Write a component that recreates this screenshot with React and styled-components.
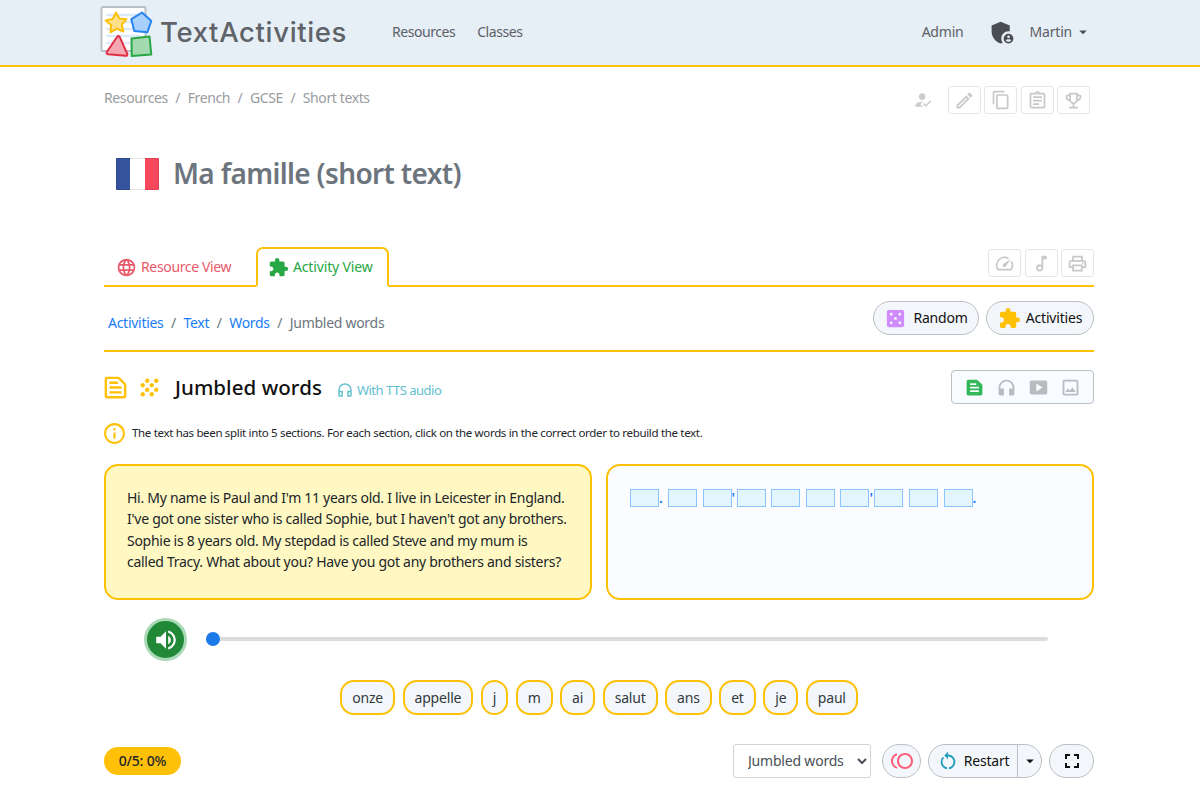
import React, { useState } from "react";
import styled, { createGlobalStyle } from "styled-components";
import {
  MdAdminPanelSettings,
  MdArrowDropDown,
  MdCasino,
  MdContentCopy,
  MdExtension,
  MdFullscreen,
  MdGrain,
  MdHeadphones,
  MdHowToReg,
  MdInfoOutline,
  MdLanguage,
  MdOutlineAssignment,
  MdOutlineEmojiEvents,
  MdOutlineHeadphones,
  MdOutlineImage,
  MdOutlineModeEdit,
  MdOutlineMusicNote,
  MdOutlinePrint,
  MdOutlineSpeed,
  MdOutlineTextSnippet,
  MdOutlineToll,
  MdRestartAlt,
  MdSmartDisplay,
  MdTextSnippet,
  MdVolumeUp,
} from "react-icons/md";

const GlobalStyle = createGlobalStyle`
  :root {
    --yellow: #ffc107;
    --pale: #f3f7fb;
    --grey: #6c757d;
    --dark: #212529;
  }

  * {
    box-sizing: border-box;
  }

  body {
    margin: 0;
    background: #fff;
    color: var(--dark);
    font-family: "Noto Sans", "Open Sans", sans-serif;
    font-size: 14px;
    letter-spacing: -0.2px;
    line-height: 20px;
    overflow: hidden;
  }

  svg {
    display: block;
    flex: none;
  }
`;

const Header = styled.header`
  height: 67px;
  padding: 0 108px 1px 100px;
  display: flex;
  align-items: center;
  background: #e6eef6;
  border-bottom: 2px solid var(--yellow);
`;

const Brand = styled.div`
  display: flex;
  align-items: center;
  gap: 7px;
  width: 292px;
  font-family: Inter, sans-serif;
  font-size: 27.5px;
  font-weight: 500;
  letter-spacing: 0.65px;
  color: #5f6368;
`;

const Nav = styled.nav`
  display: flex;
  align-items: center;
  gap: ${(p) => p.$gap}px;
  margin-left: ${(p) => (p.$end ? "auto" : "0")};
  letter-spacing: ${(p) => (p.$end ? "-0.2px" : "-0.45px")};
  color: #5c6066;
`;

const UserMenu = styled.div`
  display: flex;
  align-items: center;
  gap: 2px;

  svg {
    color: #4a4d52;
  }
`;

const Page = styled.main`
  width: 990px;
  margin: 0 auto 0 104px;
`;

const Row = styled.div`
  display: flex;
  align-items: center;
  justify-content: space-between;
`;

const TopRow = styled(Row)`
  padding: 19px 4px 0 0;
`;

const Crumbs = styled.div`
  display: flex;
  gap: 7.5px;
  padding: ${(p) => (p.$muted ? "0 0 4px" : "9px 0 0 1px")};
  letter-spacing: ${(p) => (p.$muted ? "-0.38px" : "-0.28px")};
  color: ${(p) => (p.$muted ? "#999c9f" : "#6c757d")};

  a {
    color: ${(p) => (p.$muted ? "inherit" : "#1a7df5")};
  }
`;

const Tools = styled.div`
  display: flex;
  align-items: center;
  gap: 3.5px;
  color: #ccc;

  > svg {
    margin-right: 11px;
  }
`;

const ToolButton = styled.button`
  width: 33px;
  height: 28px;
  padding: 0;
  display: flex;
  align-items: center;
  justify-content: center;
  color: #c8c8c8;
  background: #fff;
  border: 1px solid #e6e6e6;
  border-radius: 3px;
`;

const TitleRow = styled.div`
  height: 119px;
  padding: 1px 0 0 12px;
  display: flex;
  align-items: center;
  gap: 14px;
`;

const Flag = styled.div`
  width: 43px;
  height: 32px;
  border: 1px solid rgba(0, 0, 0, 0.1);
  border-radius: 1px;
  background: linear-gradient(
    90deg,
    #34539c 33.3%,
    #fff 33.3%,
    #fff 66.6%,
    #f8485e 66.6%
  );
  background-origin: border-box;
`;

const Title = styled.h1`
  margin: 0 0 2px;
  font-size: 28px;
  font-weight: 600;
  line-height: 36px;
  letter-spacing: -0.65px;
  color: #6c757d;
`;

const Tabs = styled.div`
  display: flex;
  align-items: flex-end;
  height: 54px;
`;

const Tab = styled.div`
  height: 40px;
  padding: ${(p) => (p.$active ? "0 13px 0 10px" : "2px 23px 0 12px")};
  width: ${(p) => (p.$active ? 133 : 152)}px;
  display: flex;
  align-items: center;
  gap: 4px;
  white-space: nowrap;
  letter-spacing: ${(p) => (p.$active ? "-0.15px" : "-0.35px")};
  color: ${(p) => (p.$active ? "#28a745" : "#e8596a")};
  border: 2px solid ${(p) => (p.$active ? "var(--yellow)" : "transparent")};
  border-bottom-color: ${(p) => (p.$active ? "transparent" : "var(--yellow)")};
  border-radius: ${(p) => (p.$active ? "7px 7px 0 0" : "0")};
  ${(p) => (p.$active ? "" : "border-width: 0 0 2px;")}
`;

const TabFill = styled.div`
  flex: 1;
  height: 54px;
  padding-top: 16px;
  display: flex;
  justify-content: flex-end;
  align-items: flex-start;
  border-bottom: 2px solid var(--yellow);
`;

const ActivityNav = styled(Row)`
  height: 65px;
  padding: 0 0 1px 3px;
  border-bottom: 2px solid var(--yellow);
`;

const Buttons = styled.div`
  display: flex;
  gap: 7px;
`;

const Pill = styled.button`
  width: ${(p) => p.$w}px;
  height: 34px;
  padding: 0;
  display: flex;
  align-items: center;
  justify-content: center;
  gap: ${(p) => p.$gap || 5}px;
  font: inherit;
  letter-spacing: inherit;
  color: #111;
  background: var(--pale);
  border: 1px solid #bcc0c4;
  border-radius: 17px;
`;

const Heading = styled(Row)`
  padding-top: 18px;

  h2 {
    margin: 0 14px 0 12px;
    font-size: 20.5px;
    font-weight: 500;
    line-height: 30px;
    letter-spacing: 0.05px;
    color: #111;
  }
`;

const HeadingLeft = styled.div`
  display: flex;
  align-items: center;
  color: var(--yellow);
`;

const Tts = styled.span`
  display: flex;
  align-items: center;
  gap: 3px;
  padding-top: 6px;
  font-size: 13px;
  letter-spacing: -0.5px;
  color: #62c0cf;
`;

const MediaBox = styled.div`
  width: 143px;
  height: 34px;
  padding: 0 12px;
  display: flex;
  align-items: center;
  justify-content: space-between;
  color: #b9bbbe;
  background: #f8fbff;
  border: 1px solid #bcc0c4;
  border-radius: 4px;
`;

const Info = styled.div`
  display: flex;
  align-items: center;
  gap: 5px;
  height: 26px;
  margin: 16px 0 18px -2px;
  font-size: 11.5px;
  letter-spacing: -0.33px;

  svg {
    color: var(--yellow);
  }
`;

const Panels = styled.div`
  display: grid;
  grid-template-columns: minmax(0, 1fr) minmax(0, 1fr);
  gap: 14px;
`;

const Panel = styled.div`
  height: 136px;
  padding: ${(p) => (p.$target ? "23px 22px" : "21px 21px")};
  line-height: 21.4px;
  letter-spacing: -0.28px;
  white-space: nowrap;
  background: ${(p) => (p.$target ? "#fbfcff" : "#fff8c2")};
  border: 2px solid var(--yellow);
  border-radius: 14px;
`;

const Blanks = styled.div`
  display: flex;
  color: #1a7df5;
`;

const Blank = styled.span`
  width: 29px;
  height: 18px;
  background: #e3f5ff;
  border: 1px solid #8cc4ff;
`;

const markWidths = { ".": 9, "'": 5, "": 5.6 };

const Mark = styled.span`
  width: ${(p) => markWidths[p.children]}px;
  line-height: 18px;
  height: 18px;
  font-weight: 600;
`;

const Player = styled.div`
  display: flex;
  align-items: center;
  gap: 19px;
  padding: 18px 46px 19px 40px;
`;

const PlayButton = styled.button`
  width: 43px;
  height: 43px;
  padding: 0;
  display: flex;
  align-items: center;
  justify-content: center;
  color: #fff;
  background: #218838;
  border: 3px solid #a9dab5;
  border-radius: 50%;
`;

const Slider = styled.input`
  flex: 1;
  height: 14px;
  margin: 0 0 1px;
  appearance: none;
  background: transparent;

  &::-webkit-slider-runnable-track {
    height: 4px;
    background: #dcdcdc;
    border-radius: 2px;
  }

  &::-webkit-slider-thumb {
    appearance: none;
    width: 14px;
    height: 14px;
    margin-top: -5px;
    background: #1a7ae8;
    border-radius: 50%;
  }
`;

const Words = styled.div`
  display: flex;
  justify-content: center;
  gap: 7.5px;
`;

const Word = styled.button`
  height: 35px;
  padding: 0 10px;
  font: inherit;
  letter-spacing: inherit;
  color: #343a40;
  background: var(--pale);
  border: 2px solid var(--yellow);
  border-radius: 14px;
`;

const Footer = styled(Row)`
  padding-top: 29px;
`;

const Score = styled.div`
  width: 77px;
  height: 28px;
  line-height: 28px;
  text-align: center;
  font-weight: 500;
  background: var(--yellow);
  border-radius: 14px;
`;

const Select = styled.select`
  width: 138px;
  height: 34px;
  margin-right: 4px;
  padding: 0 0 1px 10px;
  font: inherit;
  letter-spacing: inherit;
  color: #495057;
  background: #fff;
  border: 1px solid #ced4da;
  border-radius: 3px;
`;

const Split = styled.div`
  display: flex;

  button:first-child {
    border-radius: 17px 0 0 17px;
  }

  button:last-child {
    margin-left: -1px;
    border-radius: 0 17px 17px 0;
  }
`;

const Logo = () => (
  <svg width="53" height="54" viewBox="0 0 52 54" strokeLinejoin="round">
    <rect x="1" y="2" width="44" height="44" rx="1.5" fill="#fff" stroke="#b9bfc7" strokeWidth="2" />
    <path d="M6 10h34M6 17h34M6 24h34M6 31h34M6 38h34" stroke="#dce9f8" strokeWidth="2.5" />
    <path d="M15.5 7.5l3.4 6 7 .8-4.7 5.2 1.6 7-6.5-2.8-6.3 3.6.6-7.2-5.5-4.6 7.2-1.6z" fill="#ffe08a" stroke="#ffc107" strokeWidth="2" />
    <path d="M41.5 7.5l9.3 8.5-4 11.3-13-1.3-3-11.8z" fill="#a9cffb" stroke="#2684f2" strokeWidth="2" />
    <path d="M16.7 31.8c1-1.2 2-1 2.6.3l7.5 16.7c.3 1.2-.3 2.2-1.6 2l-17.7-1.6c-1.3-.3-1.8-1.2-1-2.4z" fill="#f4a9b2" stroke="#e02f44" strokeWidth="2" />
    <path d="M31 33.5l18-2 1.8 18-19.6 1.5z" fill="#a3dab0" stroke="#28a745" strokeWidth="2" />
  </svg>
);

const words = ["onze", "appelle", "j", "m", "ai", "salut", "ans", "et", "je", "paul"];
const marks = [".", "", "'", "", "", "", "'", "", "", "."];

const App = () => {
  const [position, setPosition] = useState(0);

  return (
    <>
      <GlobalStyle />
      <Header>
        <Brand>
          <Logo />
          TextActivities
        </Brand>
        <Nav $gap={22}>
          <span>Resources</span>
          <span>Classes</span>
        </Nav>
        <Nav $gap={24} $end>
          <span>Admin</span>
          <UserMenu>
            <MdAdminPanelSettings size={29} style={{ marginRight: 11 }} />
            Martin
            <MdArrowDropDown size={18} />
          </UserMenu>
        </Nav>
      </Header>

      <Page>
        <TopRow>
          <Crumbs $muted>
            <a>Resources</a>/<a>French</a>/<a>GCSE</a>/<a>Short texts</a>
          </Crumbs>
          <Tools>
            <MdHowToReg size={20} />
            <ToolButton><MdOutlineModeEdit size={21} /></ToolButton>
            <ToolButton><MdContentCopy size={20} /></ToolButton>
            <ToolButton><MdOutlineAssignment size={21} /></ToolButton>
            <ToolButton><MdOutlineEmojiEvents size={21} /></ToolButton>
          </Tools>
        </TopRow>

        <TitleRow>
          <Flag />
          <Title>Ma famille (short text)</Title>
        </TitleRow>

        <Tabs>
          <Tab><MdLanguage size={21} />Resource View</Tab>
          <Tab $active><MdExtension size={21} />Activity View</Tab>
          <TabFill>
            <Tools>
              <ToolButton><MdOutlineSpeed size={21} /></ToolButton>
              <ToolButton><MdOutlineMusicNote size={21} /></ToolButton>
              <ToolButton><MdOutlinePrint size={21} /></ToolButton>
            </Tools>
          </TabFill>
        </Tabs>

        <ActivityNav>
          <Crumbs>
            <a>Activities</a>/<a>Text</a>/<a>Words</a>/<span>Jumbled words</span>
          </Crumbs>
          <Buttons>
            <Pill $w={106} $gap={6}><MdCasino size={23} color="#d08cff" />Random</Pill>
            <Pill $w={108}><MdExtension size={23} color="#ffc107" />Activities</Pill>
          </Buttons>
        </ActivityNav>

        <Heading>
          <HeadingLeft>
            <MdOutlineTextSnippet size={29} style={{ marginLeft: -3, marginRight: 6 }} />
            <MdGrain size={27} />
            <h2>Jumbled words</h2>
            <Tts><MdOutlineHeadphones size={18} />With TTS audio</Tts>
          </HeadingLeft>
          <MediaBox>
            <MdTextSnippet size={21} color="#33b85a" />
            <MdHeadphones size={21} />
            <MdSmartDisplay size={21} />
            <MdOutlineImage size={21} />
          </MediaBox>
        </Heading>

        <Info>
          <MdInfoOutline size={25} />
          The text has been split into 5 sections. For each section, click on the words in the correct order to rebuild the text.
        </Info>

        <Panels>
          <Panel>
            Hi. My name is Paul and I'm 11 years old. I live in Leicester in England.<br />
            I've got one sister who is called Sophie, but I haven't got any brothers.<br />
            Sophie is 8 years old. My stepdad is called Steve and my mum is<br />
            called Tracy. What about you? Have you got any brothers and sisters?
          </Panel>
          <Panel $target>
            <Blanks>
              {marks.map((mark, i) => (
                <React.Fragment key={i}>
                  <Blank />
                  <Mark>{mark}</Mark>
                </React.Fragment>
              ))}
            </Blanks>
          </Panel>
        </Panels>

        <Player>
          <PlayButton><MdVolumeUp size={26} /></PlayButton>
          <Slider
            type="range"
            value={position}
            onChange={(e) => setPosition(Number(e.target.value))}
          />
        </Player>

        <Words>
          {words.map((word) => (
            <Word key={word}>{word}</Word>
          ))}
        </Words>

        <Footer>
          <Score>0/5: 0%</Score>
          <Buttons>
            <Select defaultValue="jumbled">
              <option value="jumbled">Jumbled words</option>
            </Select>
            <Pill $w={39}><MdOutlineToll size={24} color="#ff5c77" /></Pill>
            <Split>
              <Pill $w={90}><MdRestartAlt size={22} color="#1f9fba" />Restart</Pill>
              <Pill $w={25}><MdArrowDropDown size={18} /></Pill>
            </Split>
            <Pill $w={45}><MdFullscreen size={24} /></Pill>
          </Buttons>
        </Footer>
      </Page>
    </>
  );
};

export default App;
